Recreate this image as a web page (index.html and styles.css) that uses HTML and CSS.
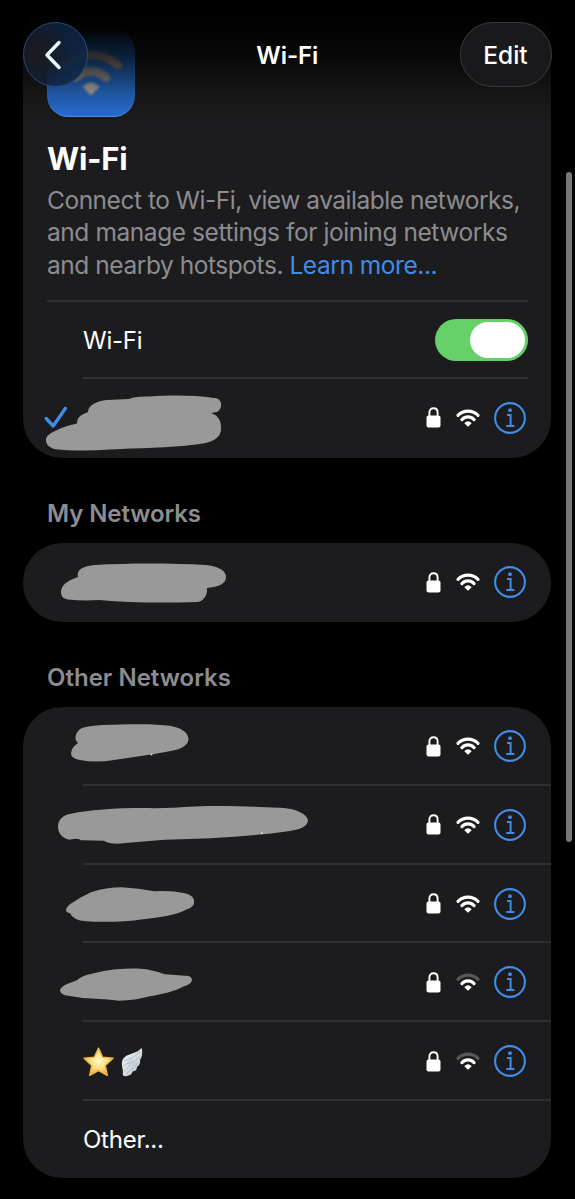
FILE: index.html
```html
<!DOCTYPE html>
<html lang="en">
<head>
<meta charset="utf-8">
<title>Wi-Fi</title>
<link rel="stylesheet" href="styles.css">
</head>
<body>
<svg class="defs" aria-hidden="true">
  <defs>
    <symbol id="lock" viewBox="0 0 15 21"><path d="M3.4 10V5.6C3.4 2.7 5.100 1.200 7.5 1.200s4.100 1.500 4.100 4.400V10" fill="none" stroke="#fff" stroke-width="1.9"/><rect x=".5" y="8.5" width="14" height="12" rx="2" fill="#fff"/></symbol>
    <symbol id="arc" viewBox="0 0 24 18"><path d="M2 6.300C7.6 .7 16.4 .7 22 6.300" fill="none" stroke="currentColor" stroke-width="3.100" stroke-linecap="round"/></symbol>
    <symbol id="wave" viewBox="0 0 24 18"><path d="M5.900 10.600C9.3 7 14.700 7 18.100 10.600" fill="none" stroke="#fff" stroke-width="3.100" stroke-linecap="round"/><path d="M8.500 14Q12 10.700 15.500 14Q15.700 14.300 15.400 14.600L12.600 17.200Q12 17.700 11.400 17.200L8.600 14.600Q8.300 14.300 8.500 14Z" fill="#fff"/></symbol>
    <symbol id="info" viewBox="0 0 34 34"><circle cx="17" cy="17" r="14.900" fill="none" stroke="#408ce8" stroke-width="2.100"/><circle cx="17" cy="9.200" r="1.900" fill="#408ce8"/><path d="M14 13.900H17.600V24.700M13.300 24.900H21.400" fill="none" stroke="#408ce8" stroke-width="2"/></symbol>
  </defs>
</svg>

<header class="nav">
  <button class="back" aria-label="Back"><svg width="22" height="32" viewBox="0 0 22 32"><path d="M17 3.500 5 16 17 28.500" fill="none" stroke="#e9faff" stroke-width="3.500" stroke-linecap="round" stroke-linejoin="round"/></svg></button>
  <h1 class="nav-title">Wi-Fi</h1>
  <button class="edit">Edit</button>
</header>

<main class="page">
  <section class="card intro">
    <div class="app-icon"><svg width="88" height="88" viewBox="0 0 88 88"><g fill="none" stroke="#9b9891" stroke-width="8.500" stroke-linecap="round"><path d="M17 36Q44 15 71 36"/><path d="M29 48.500Q44 36 59 48.500"/></g><path d="M35.500 58Q44 49 52.500 58L44 66.500Z" fill="#b5b3ae"/></svg></div>
    <h2 class="title">Wi-Fi</h2>
    <p class="about"><span class="l1">Connect to Wi-Fi, view available networks,</span><br><span class="l2">and manage settings for joining networks</span><br><span class="l3">and nearby hotspots. <a class="link">Learn more...</a></span></p>
    <div class="switch-row"><span class="label">Wi-Fi</span><span class="switch"><span class="knob"></span></span></div>
    <div class="row current">
      <svg class="mark" viewBox="23 378 380 79"><path d="M46.2 418.5 53.2 426 65.5 408.3" fill="none" stroke="#408ce8" stroke-width="3.3" stroke-linecap="round" stroke-linejoin="round"/><path d="M46 439C47 435 51 433 55 431C63 427 70 425 77 423.5C77 418 80 415 88 412C88 405 97 401 107 400L129 399Q134 396 150 396.5C170 395 194 395 214 398C223 398 223 409 217 412L211 413C219 416 221 421 221 427C222 440 209 443 196 444.5C168 448 139 448 110 449.5C91 451 71 451 54 449Q45 446 46 439Z"/></svg>
      <svg class="lock"><use href="#lock"/></svg><svg class="wifi"><use href="#arc"/><use href="#wave"/></svg><svg class="info"><use href="#info"/></svg>
    </div>
  </section>

  <h3 class="heading mine">My Networks</h3>
  <section class="card">
    <div class="row">
      <svg class="mark" viewBox="23 543 380 79"><path d="M61 591C62 584 69 580 78 577C76 569 84 566 95 565C130 563 171 563 205 565C219 566 226 571 226 577C226 585 216 587 207 588C208 596 202 602 197 602C165 603 131 603 99 600Q84 601 68 599.5Q60 598 61 591Z"/></svg>
      <svg class="lock"><use href="#lock"/></svg><svg class="wifi"><use href="#arc"/><use href="#wave"/></svg><svg class="info"><use href="#info"/></svg>
    </div>
  </section>

  <h3 class="heading other">Other Networks</h3>
  <section class="card networks">
    <div class="row">
      <svg class="mark" viewBox="23 707 380 79"><path d="M78 743C73 739 76 731 82 728C91 725 106 725 120 724.5C139 724 158 724 171 726C182 728 189 733 188.500 740C187 747 179 750 168 751.500C150 755 132 757 114 760Q95 763 80 760Q69 758 71.500 751Q73 746 78 743Z"/><circle class="dot" cx="151.500" cy="754.500" r="1"/></svg>
      <svg class="lock"><use href="#lock"/></svg><svg class="wifi"><use href="#arc"/><use href="#wave"/></svg><svg class="info"><use href="#info"/></svg>
    </div>
    <div class="row">
      <svg class="mark" viewBox="23 785.300 380 79"><path d="M58 827C58 820 63 815 71 814C91 810 121 808 154 808.500L174 808C202 805.500 240 806 278 808C293 808 306 813 308 820C308 827 300 830 288 831.500C249 837 207 839 165 840Q139 842 118 844Q108 844 104 841L81 840.500Q77 838 70 840C63 839 58 834 58 827Z"/><circle class="dot" cx="262" cy="833.500" r="1"/></svg>
      <svg class="lock"><use href="#lock"/></svg><svg class="wifi"><use href="#arc"/><use href="#wave"/></svg><svg class="info"><use href="#info"/></svg>
    </div>
    <div class="row">
      <svg class="mark" viewBox="23 863.800 380 79"><path d="M66 910Q67 905 73 902Q82 896 91 892Q106 887 122 887Q139 888 154 891Q171 890 185 893Q195 895 194 903Q193 907 187 909C177 915 160 917 143 919C125 922 101 922 86 921Q73 920 70 913Q66 912 66 910Z"/></svg>
      <svg class="lock"><use href="#lock"/></svg><svg class="wifi"><use href="#arc"/><use href="#wave"/></svg><svg class="info"><use href="#info"/></svg>
    </div>
    <div class="row">
      <svg class="mark" viewBox="23 942.800 380 79"><path d="M60 990Q61 986 69 983L77 980Q82 975 94 973C109 969 126 968 140 968.500C151 969 158 972 165 974L185 975.500Q192 975 192 980Q191 984 184 986C175 991 162 994 150 996Q135 1000 119 1000.500Q108 999 96 998.500Q80 998 65 995Q60 993 60 990Z"/></svg>
      <svg class="lock"><use href="#lock"/></svg><svg class="wifi"><use class="weak" href="#arc"/><use href="#wave"/></svg><svg class="info"><use href="#info"/></svg>
    </div>
    <div class="row">
      <svg class="mark" viewBox="23 1021.900 380 79">
        <defs>
          <radialGradient id="gold" cx=".5" cy=".45" r=".6"><stop offset="0" stop-color="#fffbc8"/><stop offset=".45" stop-color="#fbe284"/><stop offset="1" stop-color="#e9a52c"/></radialGradient>
          <linearGradient id="plume" x1="0" y1="0" x2="1" y2="1"><stop offset="0" stop-color="#f1f5f6"/><stop offset="1" stop-color="#b8c6cc"/></linearGradient>
        </defs>
        <path d="M98.500 1048 102.600 1057 113 1058.200 105.300 1065.500 107.300 1075.300 98.500 1070.500 89.700 1075.300 91.700 1065.500 84 1058.200 94.400 1057Z" fill="url(#gold)" stroke="#edb646" stroke-width="1.400" stroke-linejoin="round"/>
        <path d="M141.300 1048C137 1054 127 1053 123 1059C120 1064 124 1070 122.700 1074Q123 1077 127 1076Q132 1075 132.500 1071.500Q137 1071 137 1067Q141 1064 140 1060Q143 1056 142 1049Z" fill="url(#plume)"/>
        <path d="M124 1071Q130 1067 133 1061M126 1074Q133 1069 135 1062M123 1066Q129 1063 132 1058M124 1061Q134 1058 140 1052M127 1064Q135 1061 140 1057M132 1070Q136 1067 137 1063" fill="none" stroke="#a3b3ba" stroke-width=".7"/>
      </svg>
      <svg class="lock"><use href="#lock"/></svg><svg class="wifi"><use class="weak" href="#arc"/><use href="#wave"/></svg><svg class="info"><use href="#info"/></svg>
    </div>
    <div class="row last"><span class="label">Other...</span></div>
  </section>
</main>
<div class="scrollbar"></div>
</body>
</html>
```

FILE: styles.css
```css
* { box-sizing: border-box; }
html, body { margin: 0; background: #000; }
body { position: relative; width: 575px; height: 1199px; overflow: hidden; color: #fff; font-family: Inter, "Liberation Sans", sans-serif; font-size: 24px; }
h1, h2, h3, p { margin: 0; }
button { font: inherit; color: inherit; padding: 0; }
.defs { position: absolute; width: 0; height: 0; }

.nav { position: absolute; z-index: 2; top: 0; left: 0; width: 575px; height: 126px; padding: 22px 23.500px 0 23px; display: grid; grid-template-columns: 92px 1fr 92px; align-items: start; background: linear-gradient(#000 0, rgba(0,0,0,.95) 22px, rgba(0,0,0,.72) 55px, rgba(0,0,0,.25) 92px, transparent 126px); }
.back { width: 65px; height: 65px; border-radius: 50%; border: 1.5px solid #294a7c; background: radial-gradient(circle at 18% 50%, rgba(27,28,32,.98) 0, rgba(23,28,38,.94) 26%, rgba(15,35,66,.85) 60%, rgba(17,39,70,.88) 100%); display: grid; place-items: center; padding-right: 5px; }
.nav-title { text-align: center; font-size: 24px; font-weight: 600; line-height: 67px; letter-spacing: -.1px; }
.edit { width: 92px; height: 65px; border-radius: 33px; border: 1.5px solid #3b3b3d; background: #19191b; font-size: 24.5px; font-weight: 500; }

.page { padding: 0 24px 0 23px; }
.card { background: #1c1c1e; border-radius: 39px; overflow: hidden; }
.intro { height: 457.500px; padding-top: 29px; }
.app-icon { width: 88px; height: 88px; margin-left: 24px; border-radius: 21px; overflow: hidden; background: linear-gradient(#2367b3, #2b73df); box-shadow: inset 0 -1px 1px #579af5; -webkit-mask-image: linear-gradient(rgba(0,0,0,.3), #000 14px); mask-image: linear-gradient(rgba(0,0,0,.3), #000 14px); }
.app-icon svg { display: block; filter: blur(1.2px); }
.title { margin: 22px 0 0 24px; height: 40px; line-height: 40px; font-size: 31px; font-weight: 700; letter-spacing: -.25px; }
.about { margin: 4.500px 0 0 24px; height: 97.500px; color: #8c8c91; line-height: 32.500px; font-size: 24.500px; white-space: nowrap; }
.l1 { letter-spacing: -.48px; }
.l2 { letter-spacing: -.43px; }
.l3 { letter-spacing: -.45px; }
.link { color: #408ce8; }
.switch-row { margin: 19px 23px 0 24px; height: 78px; display: flex; align-items: center; justify-content: space-between; border-top: 2px solid #303032; }
.label { letter-spacing: -.25px; }
.switch-row .label { padding-left: 36px; }
.switch { width: 93px; height: 42px; border-radius: 21px; background: #65d168; padding: 3px; display: flex; justify-content: flex-end; }
.knob { width: 55px; height: 36px; border-radius: 18px; background: #fff; }

.row { position: relative; height: 78.750px; display: flex; align-items: center; padding-right: 24px; }
.current::before, .networks .row:not(:last-child)::after { content: ""; position: absolute; left: 60px; right: 0; height: 2px; background: #303032; }
.current::before { top: -1px; right: 23px; }
.current { padding-top: 1px; }
.networks .row:not(:last-child)::after { bottom: -.3px; }
.mark { width: 380px; height: 79px; margin-right: auto; fill: #999; flex: none; }
.dot { fill: #ddd; }
.lock { width: 15px; height: 21px; margin-right: 15px; }
.wifi { width: 24px; height: 18px; margin-right: 13.300px; color: #fff; }
.weak { color: #58585a; }
.info { width: 34px; height: 34px; }
.last { height: 77px; }
.last .label { padding-left: 60px; }

.heading { padding-left: 24px; color: #8c8c91; font-size: 24px; font-weight: 600; line-height: 32px; }
.mine { margin: 40px 0 13.500px; letter-spacing: -.1px; }
.other { margin: 40px 0 13px; }
.scrollbar { position: absolute; right: 3px; top: 172px; width: 6px; height: 670px; border-radius: 3px; background: #777779; }
```
